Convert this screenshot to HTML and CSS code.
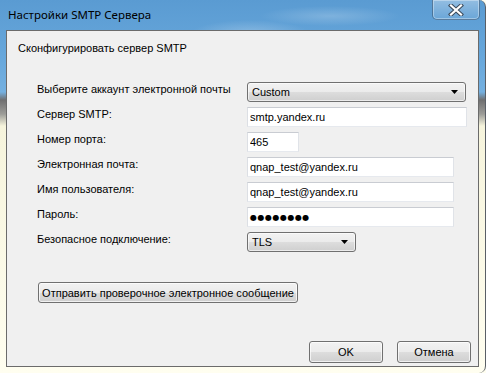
FILE: index.html
```html
<!DOCTYPE html>
<html lang="ru">
<head>
  <meta charset="UTF-8">
  <title>Настройки SMTP Сервера</title>
  <link rel="stylesheet" href="styles.css">
</head>
<body>
  <div class="window">
    <div class="titlebar">
      <span class="title">Настройки SMTP Сервера</span>
      <button class="close" title="Закрыть">
        <svg width="16" height="12" viewBox="0 0 16 12">
          <path d="M3 1.5 L13 10.5 M13 1.5 L3 10.5" stroke="#3c4a5a" stroke-width="4.2" stroke-linecap="square"/>
          <path d="M3 1.5 L13 10.5 M13 1.5 L3 10.5" stroke="#fff" stroke-width="2.2" stroke-linecap="square"/>
        </svg>
      </button>
    </div>

    <div class="client">
      <p class="heading">Сконфигурировать сервер SMTP</p>

      <div class="form">
        <label>Выберите аккаунт электронной почты</label>
        <div class="combo w-account">
          <span>Custom</span>
          <svg width="7" height="4" viewBox="0 0 7 4"><path d="M0 0 H7 L3.5 4 Z" fill="#000"/></svg>
        </div>

        <label>Сервер SMTP:</label>
        <input class="field w-server" type="text" value="smtp.yandex.ru">

        <label>Номер порта:</label>
        <input class="field w-port" type="text" value="465">

        <label>Электронная почта:</label>
        <input class="field w-mail" type="text" value="qnap_test@yandex.ru">

        <label>Имя пользователя:</label>
        <input class="field w-mail" type="text" value="qnap_test@yandex.ru">

        <label>Пароль:</label>
        <div class="field w-mail password">●●●●●●●●</div>

        <label>Безопасное подключение:</label>
        <div class="combo w-tls">
          <span>TLS</span>
          <svg width="7" height="4" viewBox="0 0 7 4"><path d="M0 0 H7 L3.5 4 Z" fill="#000"/></svg>
        </div>
      </div>

      <button class="btn btn-test">Отправить проверочное электронное сообщение</button>

      <div class="footer">
        <button class="btn">OK</button>
        <button class="btn">Отмена</button>
      </div>
    </div>
  </div>
</body>
</html>
```

FILE: styles.css
```css
* {
  margin: 0;
  padding: 0;
  box-sizing: border-box;
}
body {
  width: 486px;
  height: 373px;
  overflow: hidden;
  background: #fffef0;
  font-family: "Liberation Sans", Arial, sans-serif;
  font-size: 11px;
  color: #000;
}
/* Рамка окна (Aero) */
.window {
  width: 486px;
  height: 373px;
  border-radius: 0 7px 7px 7px;
  border-right: 1px solid #5a5f66;
  background:
    radial-gradient(ellipse 60px 14px at 250px 34px, rgba(255,255,255,0.25), transparent),
    radial-gradient(ellipse 70px 10px at 330px 16px, rgba(255,255,255,0.2), transparent),
    linear-gradient(to bottom, #5a9bd2 0, #68a8dc 60px, #74b0e0 92px, #6f6f70 100px, #9c9c98 114px, #f6f4dc 126px, #fffef0 100%);
}
.titlebar {
  display: flex;
  align-items: flex-start;
  height: 30px;
}
.title {
  padding: 7px 0 0 8px;
  font-family: "Noto Sans", "Open Sans", sans-serif;
  font-size: 11.5px;
  line-height: 16px;
}
.close {
  margin-left: auto;
  margin-right: 5px;
  width: 48px;
  height: 20px;
  border: 1px solid rgba(40, 70, 100, 0.55);
  border-top: none;
  border-radius: 0 0 5px 5px;
  background: linear-gradient(to bottom, rgba(255,255,255,0.35), rgba(255,255,255,0.08));
  box-shadow: inset 0 0 0 1px rgba(255,255,255,0.35);
  display: flex;
  align-items: center;
  justify-content: center;
}
/* Клиентская область */
.client {
  display: flex;
  flex-direction: column;
  align-items: flex-start;
  height: 337px;
  margin: 0 6px 0 6px;
  padding: 10px 0 3px 0;
  background: #f0f0f0;
  border: 1px solid #6b6b6b;
}
.heading {
  margin-left: 11px;
  line-height: 14px;
}
.form {
  display: grid;
  grid-template-columns: 210px auto;
  grid-auto-rows: 20px;
  row-gap: 5px;
  justify-items: start;
  margin: 27px 0 0 30px;
}
.form label {
  line-height: 14px;
}
.field {
  height: 20px;
  padding: 0 2px;
  border: 1px solid;
  border-color: #c9ccd2 #e0e3e8 #e6e9ee #dcdfe4;
  background: #fff;
  font: inherit;
  color: #000;
  outline: none;
}
.password {
  display: flex;
  align-items: center;
  font-family: "DejaVu Sans", sans-serif;
  font-size: 8px;
  letter-spacing: 0.5px;
}
.combo {
  display: flex;
  align-items: center;
  justify-content: space-between;
  height: 20px;
  padding: 0 7px 0 4px;
  border: 1px solid #707070;
  border-radius: 3px;
  background: linear-gradient(to bottom, #f2f2f2 0, #ebebeb 50%, #dddddd 50%, #cfcfcf 100%);
  box-shadow: inset 0 0 0 1px rgba(255,255,255,0.6);
}
.w-account { width: 219px; }
.w-server { width: 220px; }
.w-port { width: 52px; }
.w-mail { width: 207px; }
.w-tls { width: 109px; }
/* Кнопки */
.btn {
  height: 21px;
  border: 1px solid #707070;
  border-radius: 3px;
  background: linear-gradient(to bottom, #f2f2f2 0, #ebebeb 50%, #dddddd 50%, #cfcfcf 100%);
  box-shadow: inset 0 0 0 1px rgba(255,255,255,0.7);
  font: inherit;
  color: #000;
}
.btn-test {
  width: 260px;
  margin: 30px 0 0 31px;
}
.footer {
  display: flex;
  gap: 14px;
  margin-top: auto;
  align-self: stretch;
  justify-content: flex-end;
  padding-right: 7px;
}
.footer .btn {
  width: 74px;
  height: 22px;
}
```
